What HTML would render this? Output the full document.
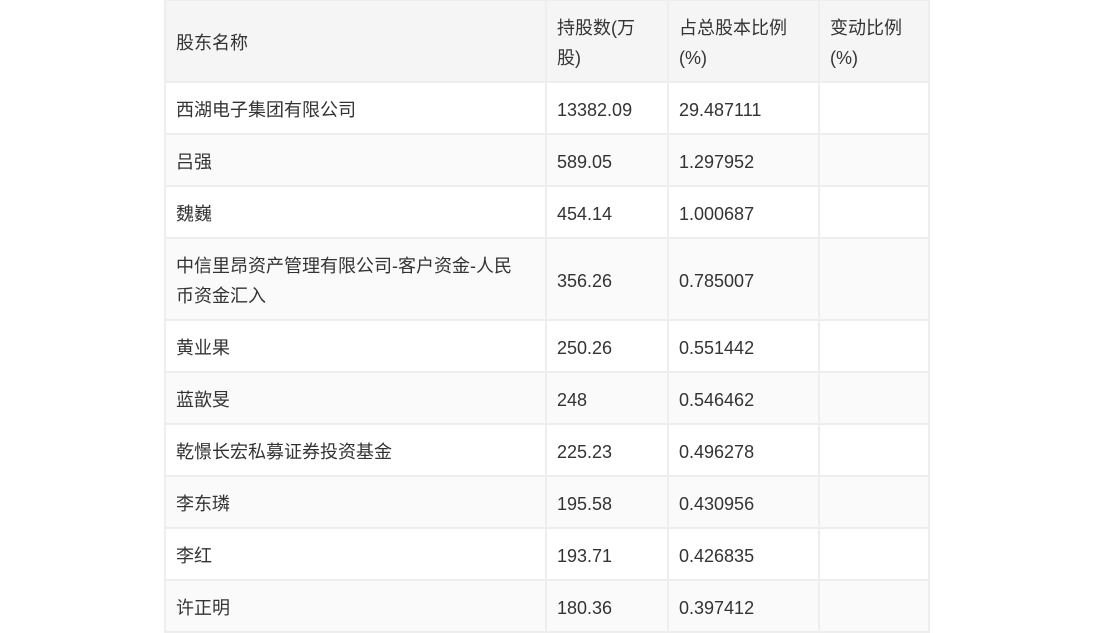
<!DOCTYPE html>
<html><head><meta charset="utf-8"><style>
body{margin:0;background:#fff;font-family:"Liberation Sans","Noto Sans CJK SC",sans-serif;}
table{position:absolute;left:164px;top:-1px;border-collapse:collapse;width:764px;table-layout:fixed;font-size:18px;color:#333;}
td{border:2px solid #eee;padding:4px 10px 0 10px;line-height:30px;vertical-align:middle;word-break:break-all;}
tr{height:52px;}
tr.h{height:82px;background:#f5f5f5;}
tr.t{height:82px;}
tr:nth-child(odd):not(.h){background:#fafafa;}
</style></head><body>
<table>
<colgroup><col style="width:381px"><col style="width:122px"><col style="width:151px"><col style="width:110px"></colgroup>
<tr class="h"><td>股东名称</td><td>持股数(万股)</td><td>占总股本比例(%)</td><td>变动比例(%)</td></tr>
<tr><td>西湖电子集团有限公司</td><td>13382.09</td><td>29.487111</td><td></td></tr>
<tr><td>吕强</td><td>589.05</td><td>1.297952</td><td></td></tr>
<tr><td>魏巍</td><td>454.14</td><td>1.000687</td><td></td></tr>
<tr class="t"><td>中信里昂资产管理有限公司-客户资金-人民<br>币资金汇入</td><td>356.26</td><td>0.785007</td><td></td></tr>
<tr><td>黄业果</td><td>250.26</td><td>0.551442</td><td></td></tr>
<tr><td>蓝歆旻</td><td>248</td><td>0.546462</td><td></td></tr>
<tr><td>乾憬长宏私募证券投资基金</td><td>225.23</td><td>0.496278</td><td></td></tr>
<tr><td>李东璘</td><td>195.58</td><td>0.430956</td><td></td></tr>
<tr><td>李红</td><td>193.71</td><td>0.426835</td><td></td></tr>
<tr><td>许正明</td><td>180.36</td><td>0.397412</td><td></td></tr>
</table>
</body></html>
